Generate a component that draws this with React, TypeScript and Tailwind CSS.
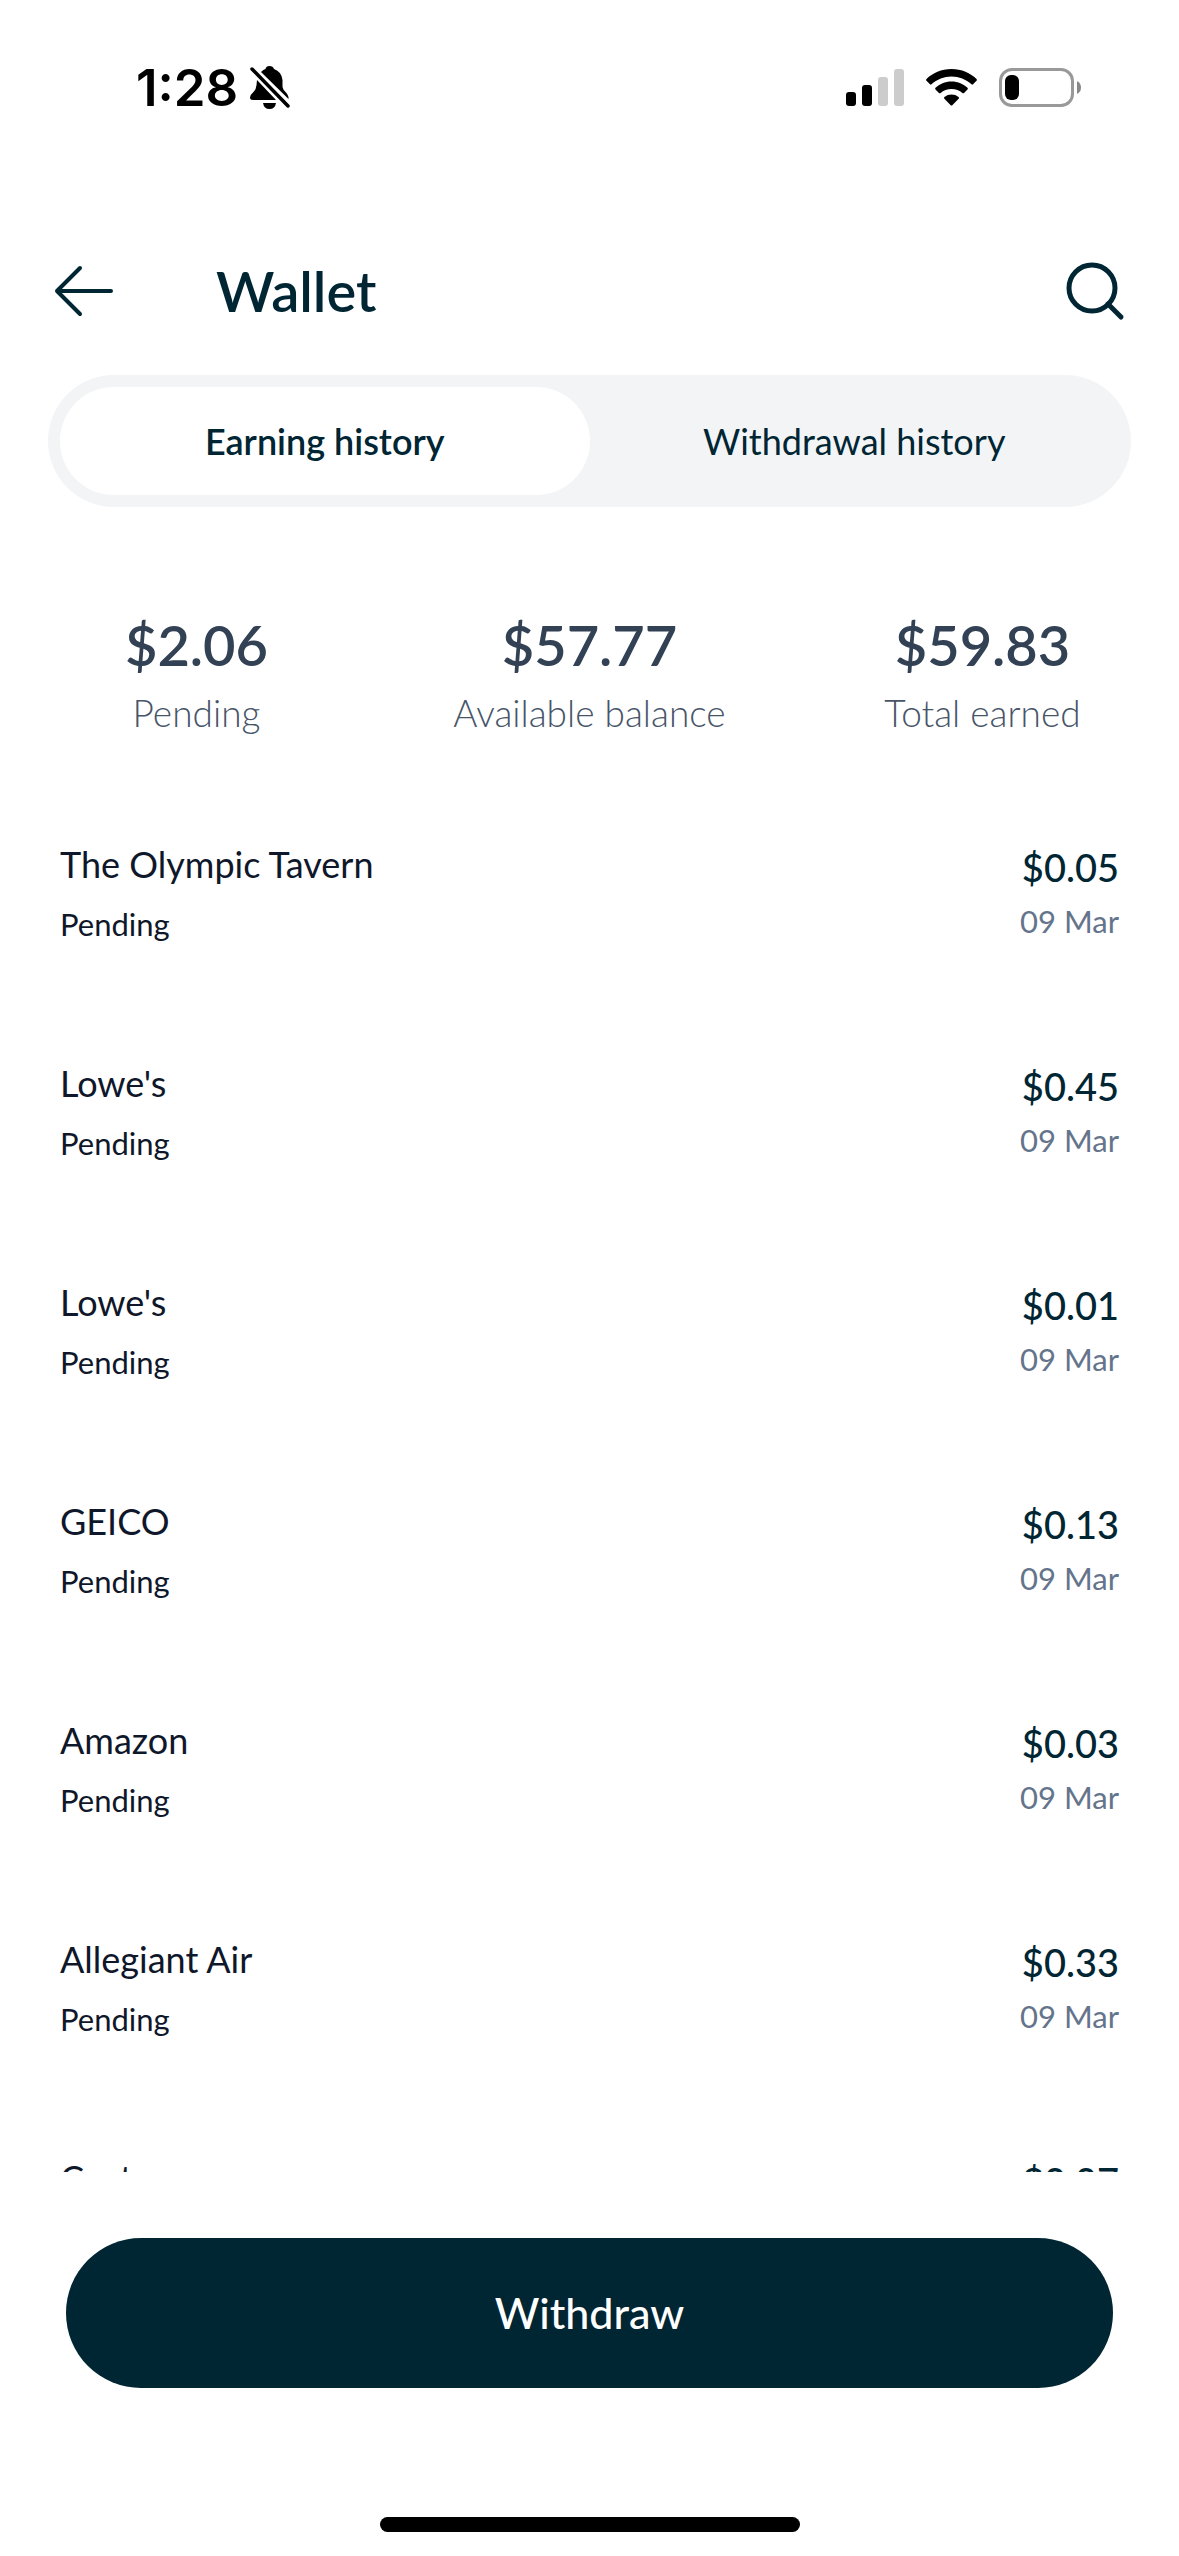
import { useState } from "react"
import { clsx } from "clsx"

type Earning = {
    id: number
    name: string
    status: string
    amount: string
    date: string
}

const tabs = ["Earning history", "Withdrawal history"]

const stats = [
    { label: "Pending", value: "$2.06" },
    { label: "Available balance", value: "$57.77" },
    { label: "Total earned", value: "$59.83" },
]

const earnings: Earning[] = [
    { id: 1, name: "The Olympic Tavern", status: "Pending", amount: "$0.05", date: "09 Mar" },
    { id: 2, name: "Lowe's", status: "Pending", amount: "$0.45", date: "09 Mar" },
    { id: 3, name: "Lowe's", status: "Pending", amount: "$0.01", date: "09 Mar" },
    { id: 4, name: "GEICO", status: "Pending", amount: "$0.13", date: "09 Mar" },
    { id: 5, name: "Amazon", status: "Pending", amount: "$0.03", date: "09 Mar" },
    { id: 6, name: "Allegiant Air", status: "Pending", amount: "$0.33", date: "09 Mar" },
    { id: 7, name: "Costco", status: "Pending", amount: "$0.07", date: "09 Mar" },
]

export default function App() {
    const [activeTab, setActiveTab] = useState(tabs[0])

    return (
        <div className="flex h-screen flex-col bg-white font-['Lato',sans-serif] text-[#002533]">
            <StatusBar />

            {/* Header */}
            <header className="flex items-center px-[54px] pt-[139px] pb-[52px]">
                <button aria-label="Back" className="shrink-0">
                    <BackIcon />
                </button>
                <h1 className="ml-[102px] flex-1 text-[56px] leading-[64px] font-semibold">Wallet</h1>
                <button aria-label="Search" className="shrink-0">
                    <SearchIcon />
                </button>
            </header>

            {/* Tabs */}
            <div className="mx-12 flex rounded-full bg-[#f2f4f6] p-3">
                {tabs.map((tab) => (
                    <button
                        key={tab}
                        onClick={() => setActiveTab(tab)}
                        className={clsx(
                            "h-[108px] flex-1 rounded-full text-[36px] leading-[48px]",
                            activeTab === tab ? "bg-white font-semibold" : "font-normal"
                        )}
                    >
                        {tab}
                    </button>
                ))}
            </div>

            {/* Totals */}
            <div className="grid grid-cols-3 pt-[106px] pb-[45px] text-center">
                {stats.map((stat) => (
                    <div key={stat.label}>
                        <p className="text-[56px] leading-[64px] font-semibold text-[#334155]">{stat.value}</p>
                        <p className="mt-3 text-[37px] leading-[48px] font-light text-[#475569]">{stat.label}</p>
                    </div>
                ))}
            </div>

            <ul className="min-h-0 flex-1 overflow-hidden px-[60px]">
                {earnings.map((earning) => (
                    <EarningRow key={earning.id} earning={earning} />
                ))}
            </ul>

            {/* Footer */}
            <footer className="px-[66px] pt-[66px] pb-6">
                <button className="h-[150px] w-full rounded-full bg-[#002533] text-[43px] leading-[56px] font-medium text-white">
                    Withdraw
                </button>
                <div className="mx-auto mt-[129px] h-[15px] w-[420px] rounded-full bg-black" />
            </footer>
        </div>
    )
}

function EarningRow({ earning }: { earning: Earning }) {
    return (
        <li className="flex h-[219px] items-center justify-between">
            <div className="text-[#0f172a]">
                <p className="text-[36px] leading-[48px]">{earning.name}</p>
                <p className="mt-4 text-[31px] leading-[40px]">{earning.status}</p>
            </div>
            <div className="text-right">
                <p className="text-[38px] leading-[48px] font-medium">{earning.amount}</p>
                <p className="mt-[10px] text-[31px] leading-[40px] text-[#64748b]">{earning.date}</p>
            </div>
        </li>
    )
}

function StatusBar() {
    return (
        <div className="flex items-center justify-between pt-14 pr-[97px] pl-[136px] text-black">
            <div className="flex items-center gap-3">
                <span className="font-['Inter',sans-serif] text-[51px] leading-[64px] font-semibold">1:28</span>
                <BellOffIcon />
            </div>
            <div className="flex items-center gap-[22px]">
                <SignalIcon />
                <WifiIcon />
                <BatteryIcon />
            </div>
        </div>
    )
}

function BackIcon() {
    return (
        <svg width="60" height="52" viewBox="0 0 60 52" fill="none" stroke="currentColor" strokeWidth="4" strokeLinecap="round" strokeLinejoin="round">
            <path d="M57 26H3M26 3L3 26L26 49" />
        </svg>
    )
}

function SearchIcon() {
    return (
        <svg width="60" height="60" viewBox="0 0 60 60" fill="none" stroke="currentColor" strokeWidth="5" strokeLinecap="round">
            <circle cx="27" cy="27" r="23" />
            <path d="M43 43L56 56" />
        </svg>
    )
}

function BellOffIcon() {
    return (
        <svg width="40" height="44" viewBox="0 0 40 44">
            <path fill="currentColor" d="M11 6Q13.500 3.500 15.500 3Q16 0 19.500 0Q23 0 24 3Q31.500 5.500 32.500 14V21Q33 24 36 26.500Q39 30 38.500 33Z" />
            <path fill="currentColor" d="M7 14L26 34H3Q0 34 0 31.500Q0 29 3 26.500Q6 24 6.500 19Z" />
            <path fill="currentColor" d="M13 37H26Q25 43 19.500 43Q14 43 13 37Z" />
            <path stroke="currentColor" strokeWidth="3.500" strokeLinecap="round" d="M2 3L38 40" />
        </svg>
    )
}

function SignalIcon() {
    return (
        <svg width="58" height="38" viewBox="0 0 58 38" fill="currentColor">
            <rect x="0" y="23" width="10" height="14" rx="3" />
            <rect x="16" y="16" width="10" height="21" rx="3" />
            <rect x="32" y="8" width="10" height="29" rx="3" fill="#ccc" />
            <rect x="48" y="0" width="10" height="37" rx="3" fill="#ccc" />
        </svg>
    )
}

function WifiIcon() {
    return (
        <svg width="51" height="38" viewBox="0 0 51 38" fill="currentColor">
            <path d="M25.500 0C35.500 0 44.500 4 50.500 10Q51.300 11 50.500 11.800L47 15.300Q46.300 16 45.500 15.300C40 10.300 33 7.500 25.500 7.500S11 10.300 5.500 15.300Q4.700 16 4 15.300L.5 11.800Q-.3 11 .5 10C6.500 4 15.500 0 25.500 0Z" />
            <path d="M25.500 12.500C32 12.500 37.500 15 41.500 18.800Q42.300 19.700 41.500 20.500L38 24Q37.200 24.700 36.400 24C33.500 21.500 29.700 20 25.500 20S17.500 21.500 14.600 24Q13.800 24.700 13 24L9.500 20.500Q8.700 19.700 9.500 18.800C13.500 15 19 12.500 25.500 12.500Z" />
            <path d="M25.500 25.500Q29.500 25.500 32.600 27.900Q33.500 28.800 32.600 29.700L26.300 36.200Q25.500 37 24.700 36.200L18.400 29.700Q17.500 28.800 18.400 27.900Q21.500 25.500 25.500 25.500Z" />
        </svg>
    )
}

function BatteryIcon() {
    return (
        <svg width="83" height="40" viewBox="0 0 83 40" fill="none">
            <rect x="1.500" y="1.500" width="72" height="36" rx="11.500" stroke="#999" strokeWidth="3" />
            <path d="M78 13Q82 15 82 19.500T78 26Z" fill="#888" />
            <rect x="6" y="7" width="14" height="25" rx="6" fill="#000" />
        </svg>
    )
}
